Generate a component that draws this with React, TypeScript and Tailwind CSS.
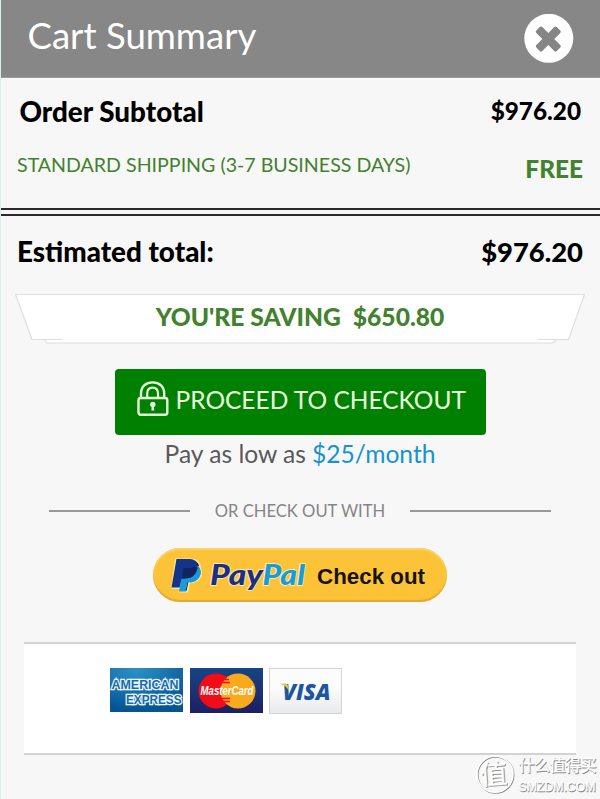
import React from "react";

function CloseIcon() {
  return (
    <svg className="h-[50px] w-[50px]" viewBox="0 0 50 50" aria-hidden="true">
      <circle cx="24.8" cy="24.3" r="24.5" fill="#ffffff" />
      <g fill="#858585" transform="rotate(45 24.3 25)">
        <rect x="9.8" y="20.8" width="29" height="8.4" rx="1.8" />
        <rect x="20.1" y="10.5" width="8.4" height="29" rx="1.8" />
      </g>
    </svg>
  );
}

function LockIcon() {
  return (
    <svg className="h-[36px] w-[32px] shrink-0" viewBox="0 0 32 36" fill="none" stroke="#e4fbd8" aria-hidden="true">
      <rect x="1.5" y="17" width="28.800" height="16.800" rx="2.200" strokeWidth="2.400" />
      <path d="M4 17V12.500C4 5.500 8.700 1.400 15.600 1.400S27.200 5.500 27.200 12.500V17" strokeWidth="2.400" />
      <path d="M10.200 17v-4.500c0-3.600 1.900-5.800 5.400-5.800s5.400 2.200 5.400 5.800V17" strokeWidth="2.200" />
      <circle cx="15.800" cy="23.500" r="2.700" fill="#e4fbd8" stroke="none" />
      <path d="M14.700 24h2.200l.3 5.500h-2.800z" fill="#e4fbd8" stroke="none" />
    </svg>
  );
}

function PayPalLogo() {
  return (
    <svg className="h-[54px] w-[294px]" viewBox="0 0 294 54" role="img" aria-label="PayPal Check out">
      <g stroke="#fde6a4" strokeWidth="1.800" strokeLinejoin="round">
        <path d="M23 11.500H37C44 11.500 48 15 46.500 21C45 28 40 31 33 31H29L27 40H19Z" />
        <path d="M44.500 18.500C48 20 49 23 48 27C46.500 32 42 34.500 36 34.500L34.500 43.500H26.500L28 36Z" />
      </g>
      <path d="M44 17.500C47.500 19.500 48.300 23 47.200 27C45.500 32 41.500 34.500 36.500 34.500H34.500L33 43.500H26L29 26Z" fill="#189bdc" />
      <path d="M23.500 11H36.500C42.500 11 45.500 14.500 44.500 20C43 27.500 38.500 30.500 31.500 30.500H28.500L26.500 39.500H18.500Z" fill="#12348a" />
      <path d="M30.500 20H38C41 18.500 43.500 18.500 44.500 20C43 27.500 38.500 30.500 31.500 30.500H28.700Z" fill="#10255f" />
      <g fontFamily="Lato, sans-serif" fontWeight="900" fontStyle="italic" fontSize="27.500" stroke="#fff0c4" strokeWidth="1.600" paintOrder="stroke">
        <text x="57" y="36.500" textLength="53" lengthAdjust="spacingAndGlyphs" fill="#1d2f80">Pay</text>
        <text x="109.500" y="36.500" textLength="42.500" lengthAdjust="spacingAndGlyphs" fill="#1c9bd3">Pal</text>
      </g>
      <text x="164" y="35.500" textLength="108" lengthAdjust="spacingAndGlyphs" fontFamily="Liberation Sans, sans-serif" fontWeight="700" fontSize="22.500" fill="#171309">Check out</text>
    </svg>
  );
}

function AmexCard() {
  return (
    <svg className="h-[44px] w-[73px]" viewBox="0 0 73 44" role="img" aria-label="American Express">
      <defs>
        <radialGradient id="amex" cx="0.35" cy="0.05" r="0.9">
          <stop offset="0" stopColor="#2b91c6" />
          <stop offset="1" stopColor="#075493" />
        </radialGradient>
      </defs>
      <rect width="73" height="44" fill="url(#amex)" />
      <g fontFamily="Liberation Sans, sans-serif" fontWeight="700" fontSize="12.500" fill="#176aaa" stroke="#e9f6fc" strokeWidth="2.600" paintOrder="stroke" strokeLinejoin="miter">
        <text x="1.500" y="21" textLength="67" lengthAdjust="spacingAndGlyphs">AMERICAN</text>
        <text x="16" y="35.500" textLength="55.500" lengthAdjust="spacingAndGlyphs">EXPRESS</text>
      </g>
    </svg>
  );
}

function MasterCard() {
  return (
    <svg className="h-[45px] w-[73px]" viewBox="0 0 73 45" role="img" aria-label="MasterCard">
      <defs>
        <linearGradient id="mc" x1="0" y1="0" x2="0" y2="1">
          <stop offset="0" stopColor="#174584" />
          <stop offset="1" stopColor="#1d1f63" />
        </linearGradient>
      </defs>
      <rect width="73" height="45" fill="url(#mc)" />
      <circle cx="26" cy="23" r="17.500" fill="#f10c17" />
      <circle cx="48" cy="23" r="17.500" fill="#f8a91c" />
      <path d="M34 11.500h5M33 14.500h7M32 30.500h8M33 33.500h7" stroke="#f10c17" strokeWidth="1.600" />
      <text x="10.500" y="27" textLength="53" lengthAdjust="spacingAndGlyphs" fontFamily="Liberation Sans, sans-serif" fontWeight="700" fontStyle="italic" fontSize="12" fill="#ffffff">MasterCard</text>
    </svg>
  );
}

function VisaCard() {
  return (
    <svg className="h-[46px] w-[73px]" viewBox="0 0 73 46" role="img" aria-label="Visa">
      <defs>
        <linearGradient id="visa" x1="0" y1="0" x2="0" y2="1">
          <stop offset="0.400" stopColor="#fcfcfd" />
          <stop offset="1" stopColor="#e9eaec" />
        </linearGradient>
      </defs>
      <rect x="0.500" y="0.500" width="72" height="45" fill="url(#visa)" stroke="#d2d3d5" />
      <text x="13.500" y="31.500" textLength="48" lengthAdjust="spacingAndGlyphs" fontFamily="Open Sans, sans-serif" fontWeight="800" fontStyle="italic" fontSize="22" fill="#1c55a0">VISA</text>
      <path d="M11 15.600h5.500c1.500 0 2.200.8 2.500 2.500l1 5.200c-1.600-3.500-4.500-6-9-7.700z" fill="#dfc445" />
    </svg>
  );
}

function Watermark() {
  const cjk = "Noto Sans CJK SC, sans-serif";
  return (
    <svg className="absolute right-0 bottom-0 h-[52px] w-[130px]" viewBox="0 0 130 52" role="img" aria-label="什么值得买">
      <g fill="#858585" stroke="#858585" strokeWidth="0.400">
        <circle cx="25.700" cy="28" r="18" fill="none" strokeWidth="1.600" />
        <text x="11" y="37.800" fontFamily={cjk} fontSize="27" transform="rotate(-4 26 28)">值</text>
        <text x="49.200" y="25" textLength="78" fontFamily={cjk} fontSize="16">什么值得买</text>
        <text x="49.200" y="44.700" textLength="77" lengthAdjust="spacingAndGlyphs" fontFamily="Liberation Sans, sans-serif" fontSize="13">SMZDM.COM</text>
      </g>
      <g fill="#ffffff" stroke="#ffffff" strokeWidth="0.300">
        <circle cx="25" cy="27.300" r="18" fill="none" strokeWidth="1.600" />
        <text x="10.200" y="37" fontFamily={cjk} fontSize="27" transform="rotate(-4 26 28)">值</text>
        <text x="48.500" y="24.300" textLength="78" fontFamily={cjk} fontSize="16">什么值得买</text>
        <text x="48.500" y="44" textLength="77" lengthAdjust="spacingAndGlyphs" fontFamily="Liberation Sans, sans-serif" fontSize="13">SMZDM.COM</text>
      </g>
    </svg>
  );
}

export default function App() {
  return (
    <main className="relative flex h-[799px] w-[600px] flex-col overflow-hidden bg-[#f7f7f7] font-[Lato,sans-serif] whitespace-nowrap text-black">
      <header className="flex h-[78px] shrink-0 items-center justify-between border-b border-[#9b9b9b] bg-[#878787] pr-[26px] pl-[27.5px]">
        <h1 className="pb-[6px] text-[36.6px] leading-none text-white">Cart Summary</h1>
        <button aria-label="Close"><CloseIcon /></button>
      </header>

      <section className="flex h-[130px] shrink-0 flex-col px-[17px]">
        <div className="flex h-[68px] items-center justify-between pr-[2px] pl-[2.5px]">
          <h2 className="text-[27.8px] leading-none font-black">Order Subtotal</h2>
          <span className="pb-[1px] text-[24.3px] leading-none font-black">$976.20</span>
        </div>
        <div className="flex h-[38px] items-center justify-between text-[#42812e]">
          <span className="text-[19.6px] leading-none">STANDARD SHIPPING (3-7 BUSINESS DAYS)</span>
          <strong className="pt-[8px] text-[24.4px] leading-none font-black">FREE</strong>
        </div>
      </section>
      <div className="h-[8px] shrink-0 border-y-2 border-[#2c292c]" />

      <section className="flex h-[78px] shrink-0 items-center justify-between px-[17px] pb-[7px] text-[27.8px] font-black">
        <h2 className="leading-none">Estimated total:</h2>
        <span className="text-[27.4px] leading-none">$976.20</span>
      </section>

      <section className="relative h-[51px] shrink-0 text-[#42812e]">
        <svg className="absolute inset-0 h-[51px] w-[600px]" viewBox="0 294 600 51" fill="#ffffff" stroke="#dedede" strokeWidth="1.200" aria-hidden="true">
          <path d="M44 339L47 343H553L557 339Z" />
          <path d="M62 339.500H32L15.500 294.500H584.500L568.500 339.500H538" />
        </svg>
        <strong className="relative flex h-[46px] items-center justify-center gap-[12px] text-[24.6px] leading-none font-black"><span>YOU'RE SAVING</span><span>$650.80</span></strong>
      </section>

      <button className="mx-auto mt-[24px] flex h-[66px] w-[371px] shrink-0 items-start rounded-[4px] bg-[#008000] pt-[12px] pl-[22px] text-[#eaffde]">
        <LockIcon />
        <span className="ml-[7px] pt-[7px] text-[24.5px] leading-none">PROCEED TO CHECKOUT</span>
      </button>
      <p className="flex h-[38px] shrink-0 items-center justify-center gap-[6px] pt-px text-[24.6px] leading-none text-[#59595b]">
        <span>Pay as low as</span><a className="text-[#1594cf]">$25/month</a>
      </p>

      <div className="mx-[49px] mt-[28px] flex h-[20px] shrink-0 items-center justify-between text-[#858585]">
        <span className="h-[1.500px] w-[141px] bg-[#999999]" />
        <span className="pt-px text-[16.6px] leading-none">OR CHECK OUT WITH</span>
        <span className="h-[1.500px] w-[141px] bg-[#999999]" />
      </div>

      <button className="mx-auto mt-[27px] h-[54px] w-[294px] shrink-0 overflow-hidden rounded-full bg-[#fcc338] shadow-[inset_0_2px_1px_#fbd36b,inset_0_-2px_1px_#dda936]">
        <PayPalLogo />
      </button>

      <section className="mx-[24px] mt-[40px] flex h-[113px] shrink-0 items-start gap-[6.500px] border-y-2 border-[#d2d2d2] bg-white pt-[24px] pl-[86px]">
        <AmexCard /><MasterCard /><VisaCard />
      </section>

      <div className="absolute inset-y-0 left-0 w-px bg-[#e0ebef]" />
      <Watermark />
    </main>
  );
}
